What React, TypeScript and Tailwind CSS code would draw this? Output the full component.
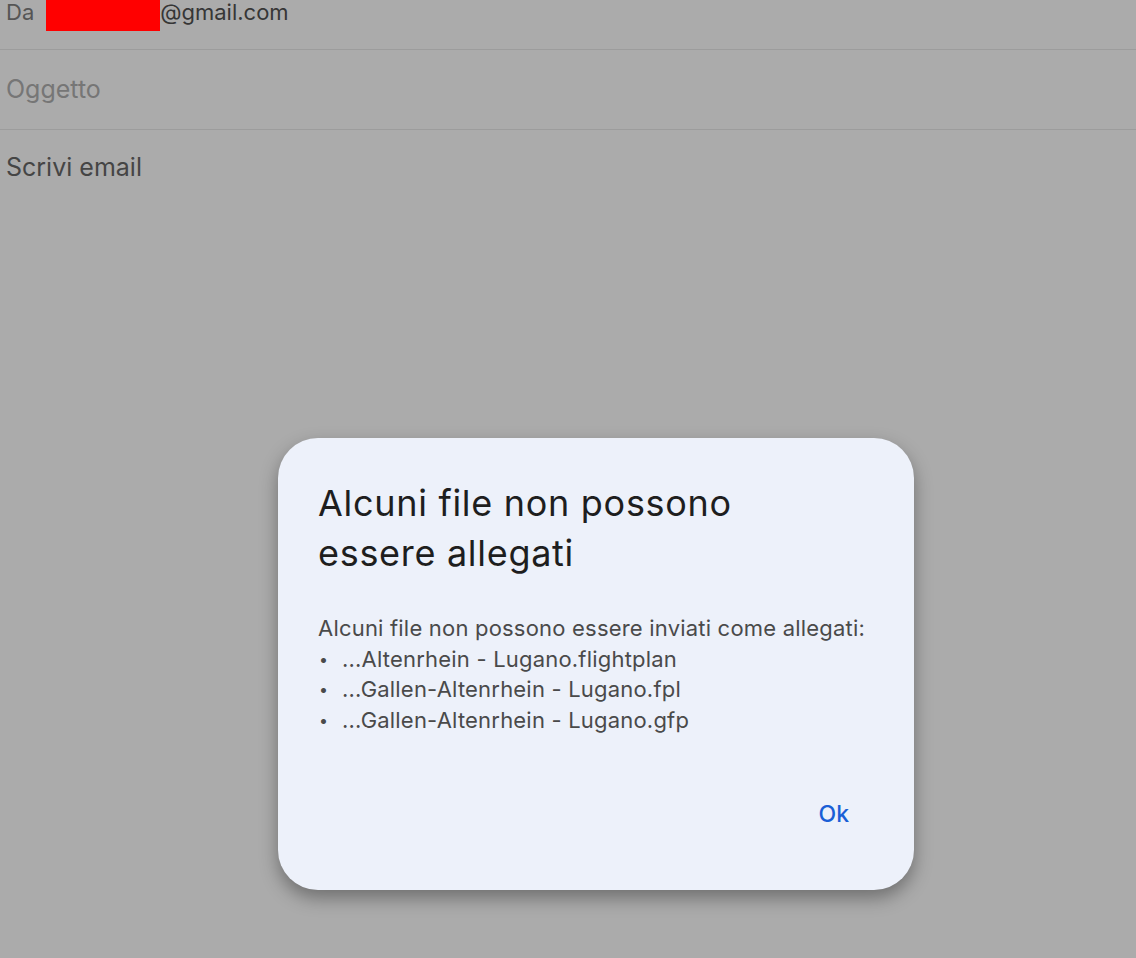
export default function App() {
  const files = [
    '...Altenrhein - Lugano.flightplan',
    '...Gallen-Altenrhein - Lugano.fpl',
    '...Gallen-Altenrhein - Lugano.gfp',
  ]

  return (
    <div className="relative w-[1136px] h-[958px] overflow-hidden bg-[#ababab] font-[Inter,sans-serif]">
      {/* Compose fields (dimmed) */}
      <div className="flex h-[50px] items-start border-b border-[#9c9c9c] pl-[6px]">
        <span className="mt-[-4px] text-[22px] text-[#555555]">Da</span>
        <div className="ml-[12px] h-[31px] w-[114px] bg-[#ff0000]" />
        <span className="mt-[-4px] text-[22px] text-[#363636]">@gmail.com</span>
      </div>
      <div className="flex h-[80px] items-center border-b border-[#9c9c9c] pl-[6px]">
        <span className="text-[25px] text-[#767676]">Oggetto</span>
      </div>
      <div className="pl-[6px] pt-[19px]">
        <span className="text-[25px] text-[#454545]">Scrivi email</span>
      </div>

      {/* Dialog */}
      <div className="absolute left-[278px] top-[438px] flex h-[452px] w-[636px] flex-col rounded-[40px] bg-[#edf1fa] px-[40px] pt-[40px] shadow-[0_8px_18px_rgba(0,0,0,0.35)]">
        <h1 className="text-[36px] leading-[50px] text-[#1e1e1e] tracking-[0.7px]">
          Alcuni file non possono
          <br />
          essere allegati
        </h1>
        <div className="mt-[35px] text-[22px] leading-[30.5px] tracking-[0.2px] text-[#4a4a4a]">
          <p>Alcuni file non possono essere inviati come allegati:</p>
          {files.map((f) => (
            <div key={f} className="flex">
              <span className="w-[22px] pl-[1px] text-[16px]">•</span>
              <span className="pl-[2px]">{f}</span>
            </div>
          ))}
        </div>
        <div className="mt-[62px] flex justify-end pr-[25px]">
          <span className="text-[23px] font-medium text-[#1a5fd6]">Ok</span>
        </div>
      </div>
    </div>
  )
}
